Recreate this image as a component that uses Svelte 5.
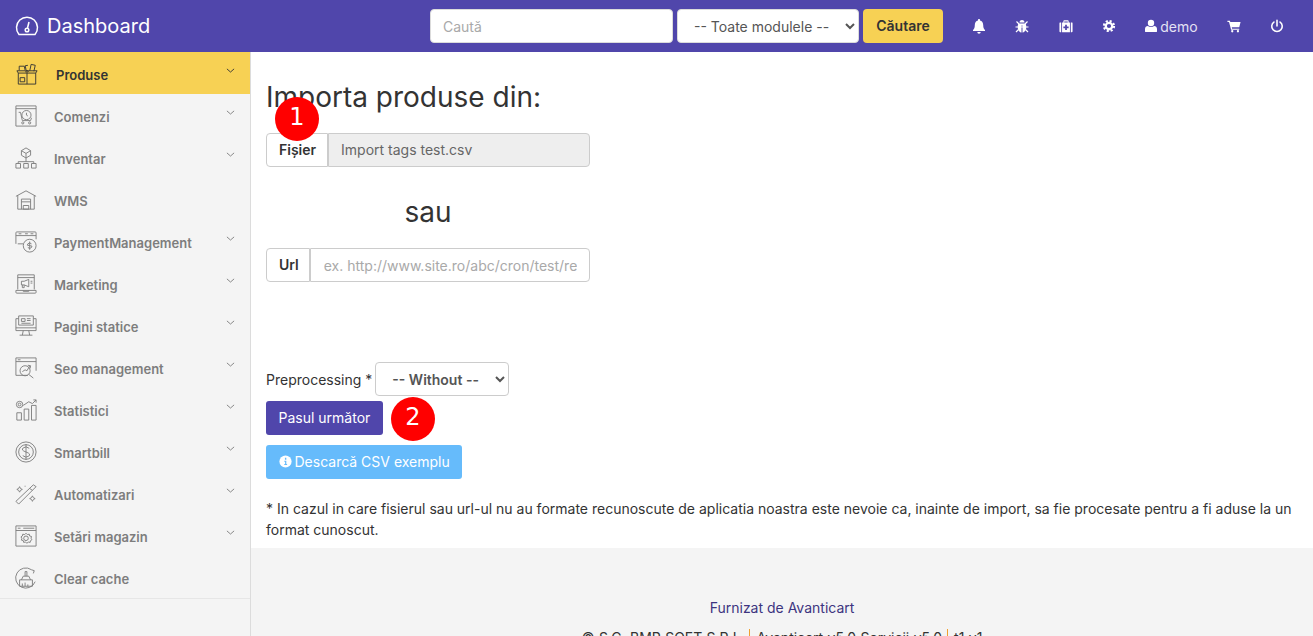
<script>
  const nav = [
    { label: 'Produse', icon: 'box', arrow: true, active: true },
    { label: 'Comenzi', icon: 'orders', arrow: true },
    { label: 'Inventar', icon: 'tree', arrow: true },
    { label: 'WMS', icon: 'house' },
    { label: 'PaymentManagement', icon: 'pay', arrow: true },
    { label: 'Marketing', icon: 'laptop', arrow: true },
    { label: 'Pagini statice', icon: 'monitor', arrow: true },
    { label: 'Seo management', icon: 'seo', arrow: true },
    { label: 'Statistici', icon: 'stats', arrow: true },
    { label: 'Smartbill', icon: 'dollar', arrow: true },
    { label: 'Automatizari', icon: 'wand', arrow: true },
    { label: 'Setări magazin', icon: 'gear', arrow: true },
    { label: 'Clear cache', icon: 'broom' }
  ]
</script>

{#snippet navIcon(name)}
  <svg class="nav-icon" viewBox="0 0 24 24" fill="none" stroke="currentColor" stroke-width="1">
    {#if name === 'box'}
      <path d="M2.500 11h19v12h-19zM12 8v15M1 8.500h22L21.500 11M1 8.500L2.500 11M4.500 16h5v4.500h-5z" />
      <path d="M3.500 8V3.500h5.500l1 4.500M11 7.500L10 3l3-.5M15 8.500l1.500-7 4.500 1-1.500 6.500M12 8l-2 2M12 8l2 2" />
    {:else if name === 'orders'}
      <path d="M1 1h22v22H1zM1 4h22" />
      <circle cx="12.500" cy="11" r="5" />
      <path d="M12.500 8.500V11l1.500 1M4 8h2l2 9h9l1-3" />
      <circle cx="8.500" cy="19.500" r="1.200" /><circle cx="16" cy="19.500" r="1.200" />
    {:else if name === 'tree'}
      <path d="M12 1l5 3v5l-5 3-5-3V4zM7 4l5 3 5-3M12 7v5M12 12v4M3.500 18v-2h17v2" />
      <path d="M1 18h5v5H1zM9.500 18h5v5h-5zM18 18h5v5h-5z" />
    {:else if name === 'house'}
      <path d="M1 8l11-6 11 6M3 7v15h18V7M7 22V11h10v11M7 14h10M9 18h6v4H9z" />
    {:else if name === 'pay'}
      <path d="M1 14V2q0-1 1-1h20q1 0 1 1v7M1 5h22M3 14h6" />
      <circle cx="16" cy="16" r="7" />
      <path d="M18 14q-2-2-4 0t2 2 2 2-4 0M16 11.500v9M4 3h3M11 3h3M17 3h3" />
    {:else if name === 'laptop'}
      <path d="M3 18V2h18v16M1 19h22v2q0 1-1 1H2q-1 0-1-1zM3 5h18M9 19v1h6v-1" />
      <path d="M7 9h3l5-2v8l-5-2H7zM8 13v3h2v-3M17 9h2M17 11h2" />
    {:else if name === 'monitor'}
      <path d="M4 4H1v13h22V4h-3M1 14h22M9 17l-1 5M15 17l1 5M5 22h14" />
      <path d="M4 11V1h16v10zM7 4h4v3H7zM13 4h4M13 6h4M7 9h10" />
    {:else if name === 'seo'}
      <path d="M14 20H1V1h22v14M1 5h22M3 3h3" />
      <circle cx="11" cy="15" r="5.500" />
      <path d="M15 19l5 4M8 16l3-2 2 1 3-5M14 9l3 .500-.500 3" />
    {:else if name === 'stats'}
      <circle cx="5" cy="6" r="3.500" /><circle cx="5" cy="6" r="1.500" />
      <path d="M2 15h5v8H2zM10 11h5v12h-5zM18 7h5v16h-5zM9 7l6-4 4 2 4-4M20 1h3v3" />
    {:else if name === 'dollar'}
      <circle cx="12" cy="12" r="11" /><circle cx="12" cy="12" r="8" />
      <path d="M15.500 8q-3.500-3-6.500-.5t3 4.500 3 4.500-6.500-.5M12 3.500v17" />
    {:else if name === 'wand'}
      <path d="M1 20L20 2l3 2L4 23zM16 6l3 2M5 4l1 2 2 1-2 1-1 2-1-2-2-1 2-1zM19 14l1 2 2 1-2 1-1 2-1-2-2-1 2-1zM11 3v1" />
    {:else if name === 'gear'}
      <path d="M1 1h22v22H1zM1 6h22M3 3.500h3M9 3.500h12" />
      <circle cx="12" cy="14.500" r="2.500" />
      <path d="M12 9l1.500 1.500 2-.500.500 2 2 .500-.500 2 1 1.500-1.500 1-.500 2-2-.500-1.500 1.500-1.500-1.500-2 .500-.500-2-2-.500.500-2-1-1.500 1.500-1 .500-2 2 .500z" />
    {:else}
      <path d="M18 3A11 11 0 1 0 22 16M5 14h14v7H5zM7 14l2-4h6l2 4M11 10V5h2v5M8 21v-3M11 21v-4M14 21v-2" />
      <path d="M18 3l3 1-1 3" />
    {/if}
  </svg>
{/snippet}

<div class="page">
  <header class="top">
    <a class="brand" href="#top">
      <svg class="gauge" viewBox="0 0 24 24" fill="none" stroke="currentColor" stroke-width="1.500">
        <path d="M4 20.500a10.500 10.500 0 1 1 16 0z" stroke-linejoin="round" />
        <circle cx="12" cy="16" r="1.800" />
        <path d="M12.500 14l1.500-6" />
      </svg>
      <span>Dashboard</span>
    </a>
    <form class="search">
      <input class="search-input" type="text" placeholder="Caută" />
      <select class="search-select"><option>-- Toate modulele --</option></select>
      <button class="search-btn" type="button">Căutare</button>
    </form>
    <nav class="tools">
      <svg class="tool tool-lg" viewBox="0 0 16 16" fill="#fff"><path d="M8 1c.6 0 1 .4 1 1v.5c2 .5 3.200 2.200 3.200 4.500 0 3 .8 4 1.800 5v1H2v-1c1-1 1.800-2 1.800-5C3.800 4.700 5 3 7 2.500V2c0-.6.400-1 1-1zM6.300 14h3.400a1.700 1.700 0 0 1-3.400 0z" /></svg>
      <svg class="tool tool-lg" viewBox="0 0 16 16" fill="#fff"><path d="M5.500 4.500a2.500 2.500 0 0 1 5 0zM4.500 5.500h7c.5 1 .8 2 .8 3.500 0 3-1.800 5.500-3.800 5.500v-7h-1v7c-2 0-3.800-2.500-3.800-5.500 0-1.500.3-2.500.800-3.500z" /><path d="M1.500 9h13M2.500 3.500l2.500 2.500M13.500 3.500L11 6M2 14l2.500-2.500M14 14l-2.500-2.500" stroke="#fff" stroke-width="1.200" /></svg>
      <svg class="tool" viewBox="0 0 16 16" fill="#fff" fill-rule="evenodd"><path d="M5 4V2.500Q5 1.500 6 1.500h4q1 0 1 1V4h-1V2.800H6V4zM1 4h1.500v11H1.500Q.5 15 .5 14V5q0-1 .5-1zM3.500 4h9v11h-9zM7 6.500v2H5v2h2v2h2v-2h2v-2H9v-2zM13.500 4H15q.500 0 .500 1v9q0 1-1 1h-1z" /></svg>
      <svg class="tool" viewBox="0 0 16 16"><circle cx="8" cy="8" r="3.700" fill="none" stroke="#fff" stroke-width="2.600" /><circle cx="8" cy="8" r="5.800" fill="none" stroke="#fff" stroke-width="2.400" stroke-dasharray="2.400 2.160" /></svg>
      <span class="user">
        <svg class="user-icon" viewBox="0 0 14 16" fill="#fff"><circle cx="7" cy="4.500" r="3.700" /><path d="M0 14v-2.500C0 9.500 1.500 8 3.300 8c1 .7 2.300 1.100 3.700 1.100S9.700 8.700 10.700 8C12.500 8 14 9.500 14 11.500V14q0 1-1 1H1q-1 0-1-1z" /></svg>
        demo
      </span>
      <svg class="tool" viewBox="0 0 16 16" fill="#fff"><path d="M.5 2h2.800l.5 1.500H15.500l-1.500 6H5.500l.3 1.500H14v1.300H4.700L2.300 3.300H.5z" /><circle cx="6" cy="14" r="1.300" /><circle cx="12.500" cy="14" r="1.300" /></svg>
      <svg class="tool" viewBox="1 0 14 16" fill="none" stroke="#fff" stroke-width="1.800" stroke-linecap="round"><path d="M8 1.500V8M4.500 3.500a6 6 0 1 0 7 0" /></svg>
    </nav>
  </header>

  <div class="body">
    <aside class="side">
      <ul class="menu">
        {#each nav as item}
          <li class="item" class:active={item.active}>
            {@render navIcon(item.icon)}
            <span class="label">{item.label}</span>
            {#if item.arrow}
              <svg class="chev" viewBox="0 0 10 6" fill="none" stroke="currentColor" stroke-width="1"><path d="M1 1l4 3.500L9 1" /></svg>
            {/if}
          </li>
        {/each}
      </ul>
    </aside>

    <div class="right">
      <main class="main">
        <h2 class="title">Importa produse din:</h2>
        <div class="group file-group">
          <span class="addon">Fișier</span>
          <span class="field file-name">Import tags test.csv</span>
          <span class="marker marker-one">1</span>
        </div>
        <h3 class="or">sau</h3>
        <div class="group">
          <span class="addon">Url</span>
          <input class="field" type="text" placeholder="ex. http://www.site.ro/abc/cron/test/report.csv" />
        </div>
        <div class="pre">
          <label for="pre">Preprocessing *</label>
          <select id="pre" class="pre-select"><option>-- Without --</option></select>
        </div>
        <div class="next-row">
          <button class="btn btn-next" type="button">Pasul următor</button>
          <span class="marker marker-two">2</span>
        </div>
        <button class="btn btn-info" type="button">
          <svg class="info" viewBox="0 0 16 16"><circle cx="8" cy="8" r="7.500" fill="#fff" /><path d="M6.500 7h2.500v4h1v1.300H6.500V11h1V8.300h-1zM7.300 3.500h1.700v2.200H7.300z" fill="#66bbfb" /></svg>
          Descarcă CSV exemplu
        </button>
        <p class="note">* In cazul in care fisierul sau url-ul nu au formate recunoscute de aplicatia noastra este nevoie ca, inainte de import, sa fie procesate pentru a fi aduse la un format cunoscut.</p>
      </main>
      <footer class="foot">
        <a class="foot-link" href="#top">Furnizat de Avanticart</a>
        <p class="foot-line">© S.C. BMP SOFT S.R.L. <i></i> Avanticart v5.0 Servicii v5.0 <i></i> t1 v1</p>
      </footer>
    </div>
  </div>
</div>

<style>
  :global(body) {
    margin: 0;
    font-family: Inter, "Noto Sans", sans-serif;
    font-size: 14px;
    color: #333;
    background: #fff;
  }
  .page {
    height: 636px;
    overflow: hidden;
  }

  .top {
    display: flex;
    align-items: center;
    height: 52px;
    background: #5046ab;
    color: #fff;
  }
  .brand {
    display: flex;
    align-items: center;
    gap: 8px;
    width: 430px;
    padding-left: 15px;
    box-sizing: border-box;
    color: #fff;
    font-size: 20px;
    text-decoration: none;
  }
  .gauge {
    width: 24px;
    height: 24px;
  }
  .search {
    display: flex;
    gap: 4px;
    margin: 0;
  }
  .search-input,
  .search-select,
  .search-btn {
    height: 34px;
    box-sizing: border-box;
    border-radius: 4px;
    font-family: inherit;
    font-size: 14px;
  }
  .search-input {
    width: 243px;
    padding: 0 12px;
    border: 1px solid #dbdbdb;
  }
  .search-input::placeholder,
  .field::placeholder {
    color: #a9a9a9;
  }
  .search-select {
    width: 182px;
    padding: 0 12px;
    border: 1px solid #dbdbdb;
    background: #fff;
    color: #555;
  }
  .search-btn {
    width: 80px;
    padding: 0 0 2px;
    border: 0;
    background: #f7d154;
    color: #333;
    font-weight: 600;
  }
  .tools {
    display: flex;
    align-items: center;
    gap: 29.300px;
    margin-left: 29px;
  }
  .tool {
    width: 14px;
    height: 14px;
  }
  .tool-lg {
    width: 16px;
    height: 16px;
    margin: 0 -1px;
  }
  .user {
    display: flex;
    align-items: center;
    gap: 3px;
    color: #e4e2f4;
  }
  .user-icon {
    width: 12px;
    height: 14px;
  }

  .body {
    display: flex;
    height: 584px;
  }
  .side {
    flex: none;
    width: 250px;
    background: #f4f4f4;
    border-right: 1px solid #dcdcdc;
  }
  .menu {
    margin: 0;
    padding: 0;
    list-style: none;
    border-bottom: 1px solid #e6e6e6;
  }
  .item {
    display: flex;
    align-items: center;
    height: 42px;
    padding-left: 15px;
    color: #7d7d7d;
    font-size: 13px;
    font-weight: 600;
    position: relative;
  }
  .item.active {
    background: #f7d154;
    color: #333;
    padding-left: 16px;
  }
  .item.active .label {
    margin-left: 18px;
  }
  .nav-icon {
    width: 22px;
    height: 22px;
    flex: none;
    margin-top: 2px;
  }
  .label {
    margin-left: 17px;
    padding-top: 4px;
  }
  .chev {
    position: absolute;
    right: 15px;
    top: 16px;
    width: 9px;
    height: 5.400px;
  }

  .right {
    flex: 1;
    min-width: 0;
    display: flex;
    flex-direction: column;
  }
  .main {
    flex: none;
    height: 496px;
    padding: 0 15px;
    box-sizing: border-box;
  }
  .title {
    margin: 27px 0 0;
    font-size: 28px;
    font-weight: 400;
    line-height: 36px;
  }
  .group {
    display: flex;
    width: 324px;
    height: 34px;
    position: relative;
  }
  .file-group {
    margin-top: 18px;
  }
  .addon {
    padding: 0 10px 2px 12px;
    display: flex;
    align-items: center;
    background: #fff;
    border: 1px solid #ccc;
    border-radius: 4px 0 0 4px;
    box-sizing: border-box;
    font-weight: 600;
    color: #333;
  }
  .file-group .addon {
    padding-right: 11px;
  }
  .field {
    flex: 1;
    min-width: 0;
    box-sizing: border-box;
    display: flex;
    align-items: center;
    padding: 0 12px 0 13px;
    border: 1px solid #ccc;
    border-radius: 0 4px 4px 0;
    font-family: inherit;
    font-size: 14px;
    color: #666;
  }
  .file-name {
    background: #eee;
    padding-left: 12px;
    padding-bottom: 2px;
  }
  .marker {
    position: absolute;
    width: 44px;
    height: 44px;
    border-radius: 50%;
    background: #f00;
    color: #fff;
    font-family: "DejaVu Sans", sans-serif;
    font-size: 24px;
    line-height: 40px;
    text-align: center;
  }
  .marker-one {
    left: 9px;
    top: -36px;
  }
  .or {
    margin: 28px 0 19px;
    width: 324px;
    text-align: center;
    font-size: 28px;
    font-weight: 400;
    line-height: 34px;
  }
  .pre {
    display: flex;
    align-items: center;
    gap: 3px;
    margin-top: 80px;
    height: 34px;
  }
  .pre-select {
    height: 34px;
    width: 134px;
    padding: 0 12px;
    background: #fff;
    border: 1px solid #ccc;
    border-radius: 4px;
    font-family: inherit;
    font-size: 14px;
    font-weight: 600;
    color: #555;
  }
  .next-row {
    position: relative;
    margin-top: 5px;
    height: 34px;
  }
  .btn {
    display: block;
    height: 34px;
    padding: 0 12.500px 1px;
    border: 0;
    border-radius: 3px;
    color: #fff;
    font-family: inherit;
    font-size: 14px;
  }
  .btn-next {
    background: #5046ab;
  }
  .marker-two {
    left: 125px;
    top: -4px;
  }
  .btn-info {
    display: flex;
    align-items: center;
    gap: 3px;
    margin-top: 10px;
    background: #66bbfb;
  }
  .info {
    width: 13px;
    height: 13px;
  }
  .note {
    margin: 19px 0 0;
    line-height: 21px;
    color: #333;
  }
  .foot {
    flex: 1;
    background: #f4f4f4;
    text-align: center;
    padding-top: 51px;
    box-sizing: border-box;
  }
  .foot-link {
    display: block;
    color: #3d3480;
    text-decoration: none;
    line-height: 17px;
  }
  .foot-line {
    margin: 13px 0 0;
    line-height: 17px;
    word-spacing: 0.500px;
  }
  .foot-line i {
    display: inline-block;
    width: 1px;
    height: 17px;
    margin-right: 2px;
    background: #f0a030;
    vertical-align: -3px;
  }
</style>
